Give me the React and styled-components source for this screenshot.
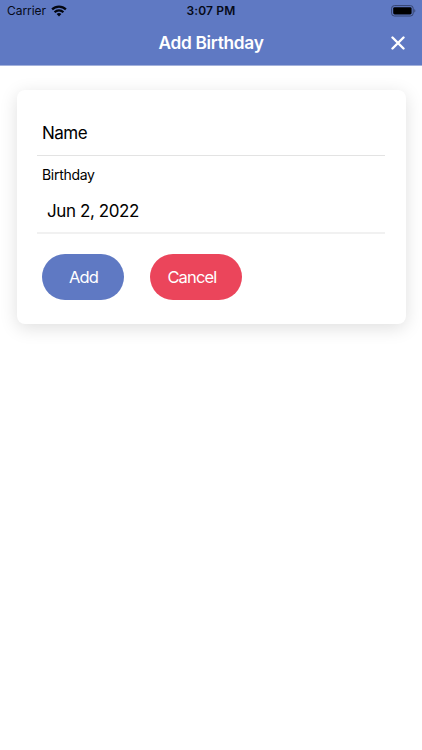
import React from 'react'
import styled, { createGlobalStyle } from 'styled-components'

const App = () => {
  return (
    <Page>
      <GlobalStyle />
      <Header>
        <StatusBar>
          <Carrier>
            Carrier
            <WifiIcon />
          </Carrier>
          <Time>3:07 PM</Time>
          <BatteryIcon />
        </StatusBar>
        <Toolbar>
          <Title>Add Birthday</Title>
          <CloseButton aria-label='Close'>
            <CloseIcon />
          </CloseButton>
        </Toolbar>
      </Header>
      <Card>
        <NameItem>
          <Name>Name</Name>
        </NameItem>
        <DateItem>
          <Label>Birthday</Label>
          <DateValue>Jun 2, 2022</DateValue>
        </DateItem>
        <Buttons>
          <Button $width='82px' $pad='27px' $color='#5f79c3'>Add</Button>
          <Button $width='92px' $pad='17px' $color='#eb455b'>Cancel</Button>
        </Buttons>
      </Card>
    </Page>
  )
}

const WifiIcon = () => (
  <svg width='16' height='12' viewBox='0 0 16 12'>
    <g fill='none' stroke='#030611' strokeWidth='2.2'>
      <path d='M1.1 4.4a9.8 9.8 0 0 1 13.8 0' />
      <path d='M3.6 7.2a6.2 6.2 0 0 1 8.8 0' />
    </g>
    <path d='M8 11.6 5.6 9.1a3.4 3.4 0 0 1 4.8 0z' fill='#030611' />
  </svg>
)

const BatteryIcon = () => (
  <svg width='26' height='12' viewBox='0 0 26 12'>
    <rect x='0.6' y='0.6' width='21.6' height='10.4' rx='2.8' fill='none' stroke='#35446f' />
    <rect x='2.2' y='2.2' width='18.4' height='7.2' rx='1.4' fill='#000' />
    <path d='M23.4 3.9c1.2.5 1.2 3.1 0 3.6z' fill='#35446f' />
  </svg>
)

const CloseIcon = () => (
  <svg width='14' height='14' viewBox='0 0 14 14'>
    <path d='M1.5 1.5l11 11M12.5 1.5l-11 11' stroke='#fff' strokeWidth='2.4' strokeLinecap='round' />
  </svg>
)

export default App

const GlobalStyle = createGlobalStyle`
  * {
    box-sizing: border-box;
  }

  body {
    margin: 0;
    background: #fff;
    font-family: Inter, "Liberation Sans", sans-serif;
    color: #000;
  }
`;

const Page = styled.div`
  min-height: 750px;
  overflow: hidden;
`;

const Header = styled.header`
  height: 66px;
  background: #5f79c3;
  border-bottom: 1px solid #a3b1db;
`;

const StatusBar = styled.div`
  display: grid;
  grid-template-columns: 1fr auto 1fr;
  align-items: center;
  height: 21px;
  padding: 0 5px 0 7px;

  > :last-child {
    justify-self: end;
  }
`;

const Carrier = styled.span`
  display: flex;
  align-items: center;
  gap: 5px;
  font-size: 12px;
  letter-spacing: -0.05px;
  color: #060a18;
`;

const Time = styled.span`
  margin-left: -2px;
  font-size: 12px;
  font-weight: 600;
  letter-spacing: 0.15px;
  color: #060a18;
`;

const Toolbar = styled.div`
  display: grid;
  grid-template-columns: 1fr auto 1fr;
  align-items: center;
  height: 44px;
  padding: 0 17px;
`;

const Title = styled.h1`
  grid-column: 2;
  margin: 0;
  padding-bottom: 2px;
  font-size: 17.3px;
  font-weight: 600;
  letter-spacing: -0.3px;
  color: #fff;
`;

const CloseButton = styled.button`
  display: flex;
  justify-self: end;
  padding: 0;
  border: 0;
  background: none;
`;

const Card = styled.main`
  height: 234px;
  margin: 24px 16.5px 0;
  padding: 20px 20.5px 0;
  border-radius: 8px;
  background: #fff;
  box-shadow: 0 4px 18px rgba(0, 0, 0, 0.13);
`;

const NameItem = styled.div`
  height: 46px;
  padding: 11px 5px 0;
  border-bottom: 1px solid #e3e3e3;
`;

const Name = styled.div`
  font-size: 17px;
  line-height: 24px;
  letter-spacing: -0.5px;
`;

const DateItem = styled.div`
  height: 78px;
  padding: 9px 5px 0;
  border-bottom: 2px solid #f1f1f1;
`;

const Label = styled.div`
  font-size: 14px;
  line-height: 20px;
  letter-spacing: -0.3px;
`;

const DateValue = styled.div`
  padding: 14px 0 0 5px;
  font-size: 17px;
  line-height: 24px;
  letter-spacing: -0.4px;
`;

const Buttons = styled.div`
  display: flex;
  gap: 26.4px;
  padding: 20px 5px 0;
`;

const Button = styled.button`
  width: ${(props) => props.$width};
  height: 46px;
  padding: 0 0 0 ${(props) => props.$pad};
  border: 0;
  border-radius: 23px;
  background: ${(props) => props.$color};
  color: #fff;
  font-family: inherit;
  font-size: 16.5px;
  letter-spacing: -0.85px;
  text-align: left;
`;
